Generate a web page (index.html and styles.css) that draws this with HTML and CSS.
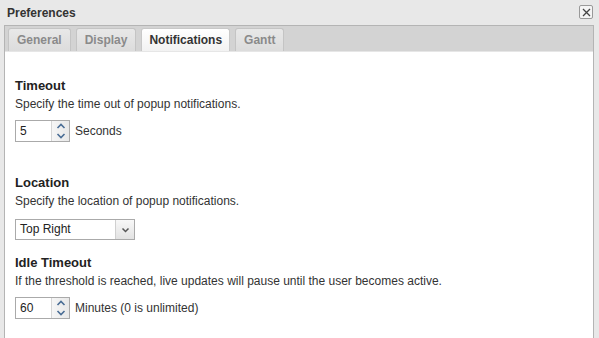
FILE: index.html
```html
<!DOCTYPE html>
<html lang="en">
<head>
    <meta charset="UTF-8">
    <title>Preferences</title>
    <link rel="stylesheet" href="styles.css">
</head>
<body>
    <div class="dialog">
        <div class="titlebar">
            <span class="title">Preferences</span>
            <span class="close-btn">
                <svg width="9" height="9" viewBox="0 0 9 9"><path d="M1 1L8 8M8 1L1 8" stroke="#444" stroke-width="1.3"/></svg>
            </span>
        </div>
        <div class="panel">
            <div class="tabs">
                <div class="tab">General</div>
                <div class="tab">Display</div>
                <div class="tab active">Notifications</div>
                <div class="tab">Gantt</div>
            </div>
            <div class="content">
                <div class="section">
                    <div class="heading">Timeout</div>
                    <div class="desc">Specify the time out of popup notifications.</div>
                    <div class="field">
                        <div class="spinner">
                            <span class="spin-value">5</span>
                            <span class="spin-btns">
                                <svg width="10" height="6" viewBox="0 0 10 6"><path d="M1.5 5L5 1.5L8.5 5" fill="none" stroke="#4a6d95" stroke-width="1.6"/></svg>
                                <svg width="10" height="6" viewBox="0 0 10 6"><path d="M1.5 1L5 4.5L8.5 1" fill="none" stroke="#4a6d95" stroke-width="1.6"/></svg>
                            </span>
                        </div>
                        <span class="unit">Seconds</span>
                    </div>
                </div>
                <div class="section location">
                    <div class="heading">Location</div>
                    <div class="desc">Specify the location of popup notifications.</div>
                    <div class="field select-field">
                        <div class="select">
                            <span class="select-value">Top Right</span>
                            <span class="select-btn">
                                <svg width="9" height="6" viewBox="0 0 9 6"><path d="M1.5 1.5L4.5 4.5L7.5 1.5" fill="none" stroke="#555" stroke-width="1.5"/></svg>
                            </span>
                        </div>
                    </div>
                </div>
                <div class="section idle">
                    <div class="heading">Idle Timeout</div>
                    <div class="desc">If the threshold is reached, live updates will pause until the user becomes active.</div>
                    <div class="field">
                        <div class="spinner">
                            <span class="spin-value">60</span>
                            <span class="spin-btns">
                                <svg width="10" height="6" viewBox="0 0 10 6"><path d="M1.5 5L5 1.5L8.5 5" fill="none" stroke="#4a6d95" stroke-width="1.6"/></svg>
                                <svg width="10" height="6" viewBox="0 0 10 6"><path d="M1.5 1L5 4.5L8.5 1" fill="none" stroke="#4a6d95" stroke-width="1.6"/></svg>
                            </span>
                        </div>
                        <span class="unit">Minutes (0 is unlimited)</span>
                    </div>
                </div>
            </div>
        </div>
    </div>
</body>
</html>
```
FILE: styles.css
```css
body {
    margin: 0;
    background-color: #e8e8e8;
    font-family: "Liberation Sans", Arial, sans-serif;
    color: #222;
    height: 338px;
    overflow: hidden;
}
.dialog {
    height: 338px;
    display: flex;
    flex-direction: column;
}
.titlebar {
    height: 25px;
    display: flex;
    align-items: center;
    justify-content: space-between;
    padding: 0 6px 0 7px;
    box-sizing: border-box;
}
.title {
    font-size: 12px;
    font-weight: bold;
    color: #333;
}
.close-btn {
    width: 12px;
    height: 12px;
    border: 1px solid #999;
    border-radius: 2px;
    background-color: #f4f4f4;
    display: flex;
    align-items: center;
    justify-content: center;
    margin-top: -1px;
}
.panel {
    flex: 1;
    margin: 0 5px 0 4px;
    border-left: 1px solid #b4b4b4;
    border-right: 1px solid #b4b4b4;
    border-top: 1px solid #b4b4b4;
    display: flex;
    flex-direction: column;
}
.tabs {
    background-color: #d3d3d3;
    height: 25px;
    padding: 2px 0 0 3px;
    box-sizing: border-box;
    display: flex;
    gap: 5px;
    align-items: flex-end;
}
.tab {
    height: 23px;
    box-sizing: border-box;
    padding: 0 8px;
    border: 1px solid #c4c4c4;
    border-bottom: none;
    border-radius: 3px 3px 0 0;
    background: linear-gradient(#e8e8e8, #dcdcdc);
    color: #8a8a8a;
    font-size: 12px;
    font-weight: bold;
    display: flex;
    align-items: center;
}
.tab.active {
    background: linear-gradient(#ffffff, #f2f2f2);
    color: #333;
    border-color: #c8c8c8;
    padding: 0 7px;
}
.content {
    flex: 1;
    background-color: #ffffff;
    border-top: 1px solid #e6e6e6;
    padding: 26px 0 0 10px;
}
.section.location {
    margin-top: 33px;
}
.section.idle {
    margin-top: 15px;
}
.heading {
    font-size: 13px;
    font-weight: bold;
    color: #222;
    line-height: 16px;
}
.desc {
    font-size: 12px;
    color: #333;
    line-height: 16px;
    margin-top: 2px;
}
.field {
    display: flex;
    align-items: center;
    margin-top: 8px;
    height: 22px;
}
.field.select-field {
    margin-top: 10px;
    height: 21px;
}
.spinner {
    width: 55px;
    height: 22px;
    box-sizing: border-box;
    border: 1px solid #aaa;
    display: flex;
    background-color: #fff;
}
.spin-value {
    flex: 1;
    font-size: 12px;
    padding-left: 4px;
    line-height: 20px;
}
.spin-btns {
    width: 17px;
    display: flex;
    flex-direction: column;
    align-items: center;
    justify-content: space-around;
    background: linear-gradient(90deg, #f6f6f6, #e8e8e8);
    border-left: 1px solid #d6d6d6;
}
.unit {
    font-size: 12px;
    color: #333;
    margin-left: 5px;
}
.select {
    width: 120px;
    height: 21px;
    box-sizing: border-box;
    border: 1px solid #aaa;
    display: flex;
}
.select-value {
    flex: 1;
    font-size: 12px;
    padding-left: 4px;
    line-height: 19px;
}
.select-btn {
    width: 18px;
    display: flex;
    align-items: center;
    justify-content: center;
    background: linear-gradient(#f8f8f8, #e2e2e2);
    border-left: 1px solid #d0d0d0;
}
```
